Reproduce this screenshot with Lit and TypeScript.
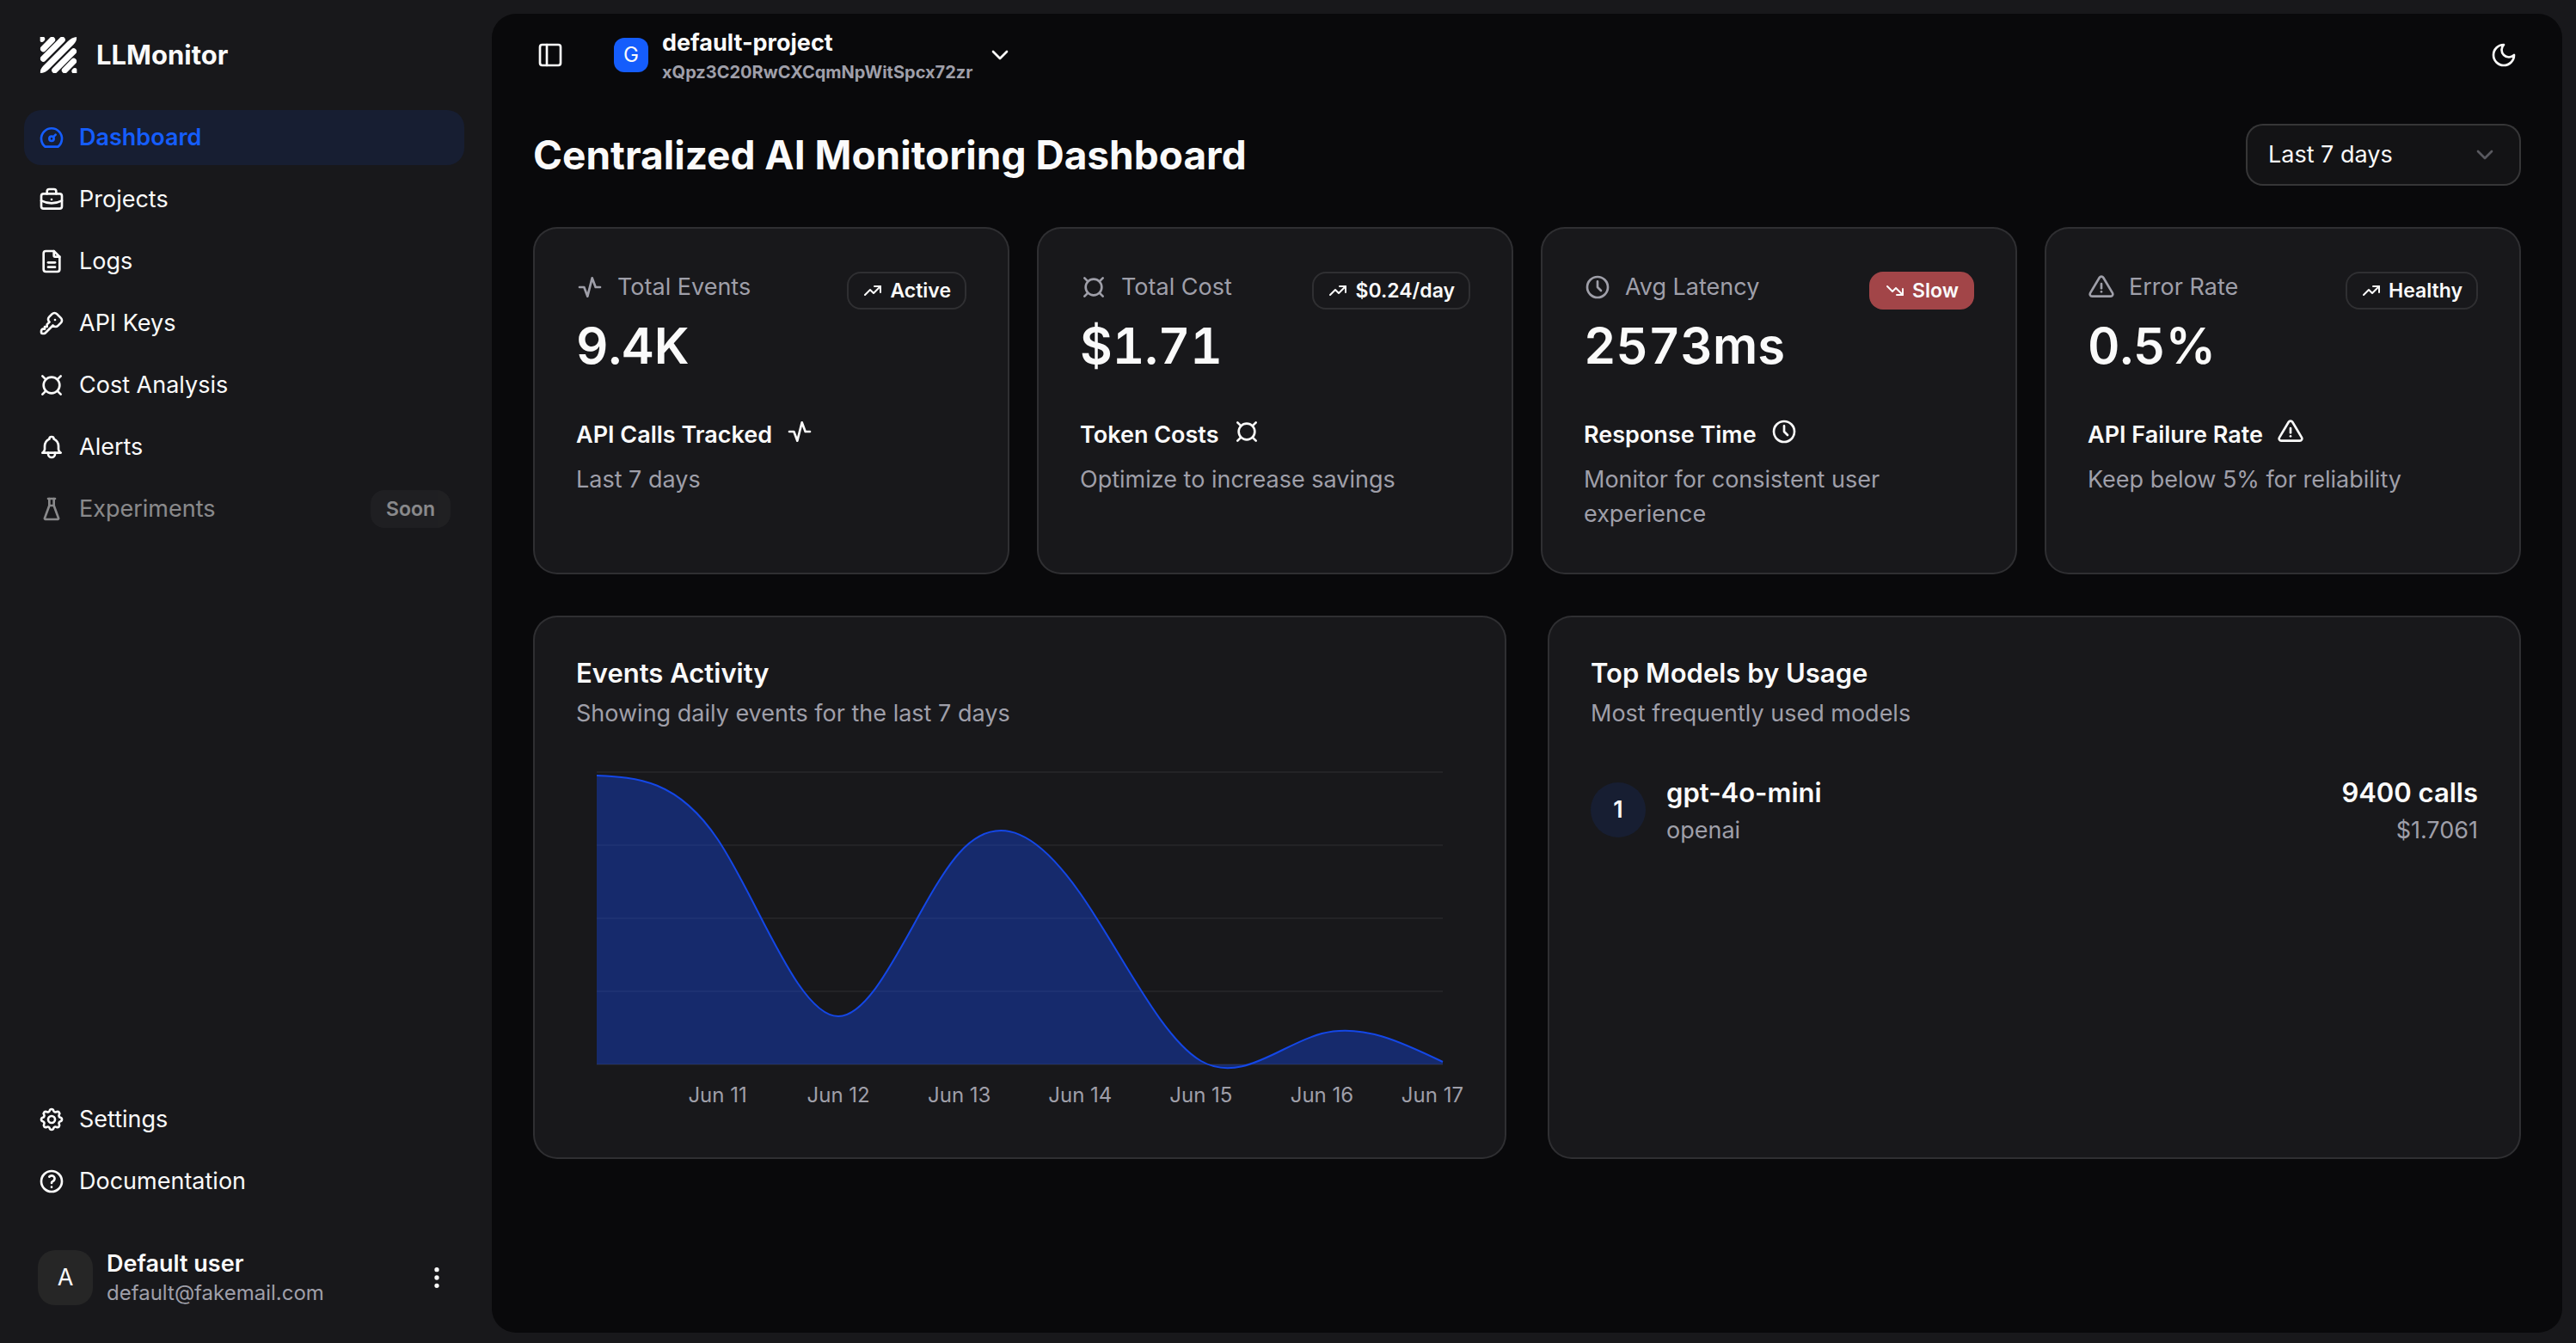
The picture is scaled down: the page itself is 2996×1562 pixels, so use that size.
import { LitElement, html, css, svg, nothing } from "lit";
import { customElement, property } from "lit/decorators.js";

const ICONS: Record<string, string[]> = {
  dashboard: ["M10 13a2 2 0 1 0 4 0a2 2 0 1 0 -4 0", "M13.45 11.55l2.05 -2.05", "M6.4 20a9 9 0 1 1 11.2 0z"],
  briefcase: [
    "M3 9a2 2 0 0 1 2 -2h14a2 2 0 0 1 2 2v9a2 2 0 0 1 -2 2h-14a2 2 0 0 1 -2 -2z",
    "M8 7v-2a2 2 0 0 1 2 -2h4a2 2 0 0 1 2 2v2",
    "M12 12l0 .01",
    "M3 13a20 20 0 0 0 18 0",
  ],
  file: [
    "M14 3v4a1 1 0 0 0 1 1h4",
    "M17 21h-10a2 2 0 0 1 -2 -2v-14a2 2 0 0 1 2 -2h7l5 5v11a2 2 0 0 1 -2 2z",
    "M9 17h6",
    "M9 13h6",
  ],
  key: [
    "M16.555 3.843l3.602 3.602a2.877 2.877 0 0 1 0 4.069l-2.643 2.643a2.877 2.877 0 0 1 -4.069 0l-.301 -.301l-6.558 6.558a2 2 0 0 1 -1.239 .578l-.175 .008h-1.172a1 1 0 0 1 -.993 -.883l-.007 -.117v-1.172a2 2 0 0 1 .467 -1.284l.119 -.13l.414 -.414h2v-2h2v-2l2.144 -2.144l-.301 -.301a2.877 2.877 0 0 1 0 -4.069l2.643 -2.643a2.877 2.877 0 0 1 4.069 0z",
    "M15 9h.01",
  ],
  currency: ["M5 12a7 7 0 1 0 14 0a7 7 0 1 0 -14 0", "M4 4l3 3", "M20 4l-3 3", "M4 20l3 -3", "M20 20l-3 -3"],
  bell: [
    "M10 5a2 2 0 1 1 4 0a7 7 0 0 1 4 6v3a4 4 0 0 0 2 3h-16a4 4 0 0 0 2 -3v-3a7 7 0 0 1 4 -6",
    "M9 17v1a3 3 0 0 0 6 0v-1",
  ],
  flask: ["M9 3l6 0", "M10 9l4 0", "M10 3v6l-4 11a.7 .7 0 0 0 .5 1h11a.7 .7 0 0 0 .5 -1l-4 -11v-6"],
  settings: [
    "M10.325 4.317c.426 -1.756 2.924 -1.756 3.35 0a1.724 1.724 0 0 0 2.573 1.066c1.543 -.94 3.31 .826 2.37 2.37a1.724 1.724 0 0 0 1.065 2.572c1.756 .426 1.756 2.924 0 3.35a1.724 1.724 0 0 0 -1.066 2.573c.94 1.543 -.826 3.31 -2.37 2.37a1.724 1.724 0 0 0 -2.572 1.065c-.426 1.756 -2.924 1.756 -3.35 0a1.724 1.724 0 0 0 -2.573 -1.066c-1.543 .94 -3.31 -.826 -2.37 -2.37a1.724 1.724 0 0 0 -1.065 -2.572c-1.756 -.426 -1.756 -2.924 0 -3.35a1.724 1.724 0 0 0 1.066 -2.573c-.94 -1.543 .826 -3.31 2.37 -2.37c1 .608 2.296 .07 2.572 -1.065z",
    "M9 12a3 3 0 1 0 6 0a3 3 0 0 0 -6 0",
  ],
  help: [
    "M3 12a9 9 0 1 0 18 0a9 9 0 1 0 -18 0",
    "M12 17l0 .01",
    "M12 13.5a1.5 1.5 0 0 1 1 -1.5a2.6 2.6 0 1 0 -3 -4",
  ],
  dots: [
    "M11 12a1 1 0 1 0 2 0a1 1 0 1 0 -2 0",
    "M11 19a1 1 0 1 0 2 0a1 1 0 1 0 -2 0",
    "M11 5a1 1 0 1 0 2 0a1 1 0 1 0 -2 0",
  ],
  panel: ["M5 3h14a2 2 0 0 1 2 2v14a2 2 0 0 1 -2 2h-14a2 2 0 0 1 -2 -2v-14a2 2 0 0 1 2 -2z", "M9 3v18"],
  chevron: ["M6 9l6 6l6 -6"],
  moon: ["M12 3a6 6 0 0 0 9 9a9 9 0 1 1 -9 -9z"],
  activity: ["M3 12h4l3 8l4 -16l3 8h4"],
  clock: ["M3 12a9 9 0 1 0 18 0a9 9 0 0 0 -18 0", "M12 7v5l3 3"],
  alert: [
    "M12 9v4",
    "M10.363 3.591l-8.106 13.534a1.914 1.914 0 0 0 1.636 2.871h16.214a1.914 1.914 0 0 0 1.636 -2.87l-8.106 -13.536a1.914 1.914 0 0 0 -3.274 0z",
    "M12 16h.01",
  ],
  up: ["M3 17l6 -6l4 4l8 -8", "M14 7l7 0l0 7"],
  down: ["M3 7l6 6l4 -4l8 8", "M21 10l0 7l-7 0"],
};

@customElement("ui-icon")
export class UiIcon extends LitElement {
  @property() name = "";

  static styles = css`
    :host {
      display: block;
      flex: none;
      width: 32px;
      height: 32px;
    }
    .glyph {
      display: block;
      width: 100%;
      height: 100%;
      fill: none;
      stroke: currentColor;
      stroke-width: 2;
      stroke-linecap: round;
      stroke-linejoin: round;
    }
  `;

  render() {
    return html`<svg class="glyph" viewBox="0 0 24 24" aria-hidden="true">
      ${(ICONS[this.name] ?? []).map((d) => svg`<path d=${d}></path>`)}
    </svg>`;
  }
}

/* Control points of a natural cubic spline along one axis. */
function splineControls(v: number[]): [number[], number[]] {
  const n = v.length - 1;
  const a = new Array(n).fill(0);
  const b = new Array(n).fill(0);
  const r = new Array(n).fill(0);
  a[0] = 0;
  b[0] = 2;
  r[0] = v[0] + 2 * v[1];
  for (let i = 1; i < n - 1; i++) {
    a[i] = 1;
    b[i] = 4;
    r[i] = 4 * v[i] + 2 * v[i + 1];
  }
  a[n - 1] = 2;
  b[n - 1] = 7;
  r[n - 1] = 8 * v[n - 1] + v[n];
  for (let i = 1; i < n; i++) {
    const m = a[i] / b[i - 1];
    b[i] -= m;
    r[i] -= m * r[i - 1];
  }
  a[n - 1] = r[n - 1] / b[n - 1];
  for (let i = n - 2; i >= 0; i--) a[i] = (r[i] - a[i + 1]) / b[i];
  b[n - 1] = (v[n] + a[n - 1]) / 2;
  for (let i = 0; i < n - 1; i++) b[i] = 2 * v[i + 1] - a[i + 1];
  return [a, b];
}

@customElement("events-chart")
export class EventsChart extends LitElement {
  private heights = [336, 262, 56, 246, 199, 4, 36, 3];
  private labels = ["Jun 11", "Jun 12", "Jun 13", "Jun 14", "Jun 15", "Jun 16", "Jun 17"];

  static styles = css`
    :host {
      display: block;
      padding: 0 24px;
    }
    .plot {
      display: block;
      width: 100%;
      height: 340px;
      overflow: visible;
    }
    .grid {
      stroke: rgba(255, 255, 255, 0.05);
      stroke-width: 2;
    }
    .area {
      fill: #1447e6;
      fill-opacity: 0.4;
    }
    .line {
      fill: none;
      stroke: #1447e6;
      stroke-width: 2;
      vector-effect: non-scaling-stroke;
    }
    .axis {
      display: grid;
      grid-template-columns: 1fr repeat(6, 2fr) 1fr;
      padding: 22px 0 10px;
      font-size: 24px;
      line-height: 28px;
      color: #9f9fa9;
      white-space: nowrap;
    }
    .tick {
      justify-self: center;
    }
    .tick:first-child {
      grid-column: 2;
    }
    .tick:last-child {
      justify-self: end;
      margin-right: -24px;
    }
  `;

  render() {
    const w = 984;
    const h = 340;
    const xs = this.heights.map((_, i) => (i * w) / (this.heights.length - 1));
    const ys = this.heights.map((v) => h - v);
    const [ax, bx] = splineControls(xs);
    const [ay, by] = splineControls(ys);
    let line = `M${xs[0]},${ys[0]}`;
    for (let i = 0; i < xs.length - 1; i++) {
      line += `C${ax[i]},${ay[i]},${bx[i]},${by[i]},${xs[i + 1]},${ys[i + 1]}`;
    }
    return html`
      <svg class="plot" viewBox="0 0 ${w} ${h}" preserveAspectRatio="none" role="img" aria-label="Daily events">
        ${[0, 1, 2, 3, 4].map((i) => svg`<line class="grid" x1="0" x2=${w} y1=${i * 85} y2=${i * 85}></line>`)}
        <path class="area" d="${line}L${w},${h}L0,${h}Z"></path>
        <path class="line" d=${line}></path>
      </svg>
      <div class="axis">${this.labels.map((l) => html`<span class="tick">${l}</span>`)}</div>
    `;
  }
}

interface Stat {
  icon: string;
  label: string;
  value: string;
  trend: string;
  badge: string;
  slow?: boolean;
  title: string;
  note: string;
}

@customElement("app-root")
export class AppRoot extends LitElement {
  private nav = [
    { icon: "dashboard", label: "Dashboard", active: true },
    { icon: "briefcase", label: "Projects" },
    { icon: "file", label: "Logs" },
    { icon: "key", label: "API Keys" },
    { icon: "currency", label: "Cost Analysis" },
    { icon: "bell", label: "Alerts" },
  ];

  private stats: Stat[] = [
    { icon: "activity", label: "Total Events", value: "9.4K", trend: "up", badge: "Active", title: "API Calls Tracked", note: "Last 7 days" },
    { icon: "currency", label: "Total Cost", value: "$1.71", trend: "up", badge: "$0.24/day", title: "Token Costs", note: "Optimize to increase savings" },
    { icon: "clock", label: "Avg Latency", value: "2573ms", trend: "down", badge: "Slow", slow: true, title: "Response Time", note: "Monitor for consistent user experience" },
    { icon: "alert", label: "Error Rate", value: "0.5%", trend: "up", badge: "Healthy", title: "API Failure Rate", note: "Keep below 5% for reliability" },
  ];

  static styles = css`
    :host {
      display: block;
      font-family: Inter, "Liberation Sans", sans-serif;
      font-size: 27px;
      line-height: 40px;
      color: #fafafa;
      background: #18181b;
    }
    * {
      box-sizing: border-box;
    }
    h1, h2, h3, p {
      margin: 0;
    }
    button, select {
      font: inherit;
      color: inherit;
      background: none;
      border: 0;
      padding: 0;
      margin: 0;
      text-align: left;
    }
    a {
      color: inherit;
      text-decoration: none;
    }
    .shell {
      display: flex;
      min-height: 100vh;
    }

    .sidebar {
      flex: none;
      width: 572px;
      display: flex;
      flex-direction: column;
      padding: 32px 32px 28px 28px;
    }
    .brand {
      display: flex;
      align-items: center;
      gap: 20px;
      height: 64px;
      padding: 0 16px;
      margin-bottom: 32px;
      font-size: 31px;
      font-weight: 700;
    }
    .logo {
      width: 48px;
      height: 48px;
    }
    .nav {
      display: flex;
      flex-direction: column;
      gap: 8px;
    }
    .bottom {
      margin-top: auto;
      margin-bottom: 32px;
    }
    .item {
      display: flex;
      align-items: center;
      gap: 16px;
      height: 64px;
      padding: 0 16px;
      border-radius: 20px;
    }
    .active {
      background: rgba(21, 93, 252, 0.1);
      color: #155dfc;
      font-weight: 600;
    }
    .disabled {
      opacity: 0.5;
    }
    .soon {
      margin-left: auto;
      padding: 6px 18px;
      border-radius: 16px;
      background: #27272a;
      font-size: 23px;
      line-height: 32px;
      font-weight: 600;
    }
    .user {
      display: flex;
      align-items: center;
      gap: 16px;
      height: 96px;
      padding: 0 16px;
    }
    .avatar {
      display: grid;
      place-items: center;
      width: 64px;
      height: 64px;
      border-radius: 20px;
      background: #262626;
    }
    .identity {
      flex: 1;
    }
    .name {
      font-weight: 600;
      line-height: 36px;
    }
    .email {
      font-size: 24px;
      line-height: 32px;
      color: #9f9fa9;
    }

    .main {
      flex: 1;
      min-width: 0;
      margin: 16px 16px 12px 0;
      border-radius: 28px;
      background: #09090b;
      padding: 0 48px 48px;
    }
    .topbar {
      display: flex;
      align-items: center;
      height: 96px;
      padding: 0 4px;
    }
    .project {
      display: flex;
      align-items: center;
      gap: 16px;
      margin-left: 58px;
    }
    .tile {
      display: grid;
      place-items: center;
      width: 40px;
      height: 40px;
      border-radius: 12px;
      background: #155dfc;
      font-size: 24px;
    }
    .lines {
      display: flex;
      flex-direction: column;
    }
    .project-name {
      font-weight: 700;
      line-height: 40px;
    }
    .project-id {
      font-size: 20px;
      line-height: 28px;
      font-weight: 700;
      color: #9f9fa9;
    }
    .theme {
      margin-left: auto;
    }
    .heading {
      display: flex;
      align-items: center;
      justify-content: space-between;
      margin: 32px 0 48px;
    }
    .title {
      font-size: 46px;
      line-height: 64px;
      font-weight: 700;
    }
    .range {
      display: grid;
      align-items: center;
      width: 320px;
      height: 72px;
    }
    .range-select {
      grid-area: 1 / 1;
      appearance: none;
      width: 100%;
      height: 100%;
      padding: 0 24px;
      border: 2px solid rgba(255, 255, 255, 0.15);
      border-radius: 20px;
      background: rgba(255, 255, 255, 0.045);
    }
    .range-icon {
      grid-area: 1 / 1;
      justify-self: end;
      margin-right: 26px;
      color: #9f9fa9;
      opacity: 0.5;
      pointer-events: none;
    }

    .stats {
      display: grid;
      grid-template-columns: repeat(4, minmax(0, 1fr));
      gap: 32px;
      margin-bottom: 48px;
    }
    .card {
      display: flex;
      flex-direction: column;
      gap: 48px;
      padding: 48px;
      border: 2px solid rgba(255, 255, 255, 0.1);
      border-radius: 28px;
      background: #18181b;
    }
    .card-head {
      display: flex;
      align-items: flex-start;
      justify-content: space-between;
    }
    .metric {
      display: flex;
      flex-direction: column;
      gap: 12px;
    }
    .label {
      display: flex;
      align-items: center;
      gap: 16px;
      color: #9f9fa9;
    }
    .value {
      font-size: 58px;
      line-height: 72px;
      font-weight: 600;
      font-variant-numeric: tabular-nums;
    }
    .badge {
      display: flex;
      align-items: center;
      gap: 8px;
      height: 44px;
      margin-top: 2px;
      padding: 0 16px;
      border: 2px solid rgba(255, 255, 255, 0.1);
      border-radius: 16px;
      font-size: 23px;
      line-height: 32px;
      font-weight: 600;
    }
    .slow {
      padding: 0 18px;
      border: 0;
      background: rgba(255, 100, 103, 0.6);
    }
    .badge-icon {
      width: 24px;
      height: 24px;
    }
    .foot {
      display: flex;
      flex-direction: column;
      gap: 12px;
    }
    .foot-title {
      display: flex;
      align-items: flex-start;
      gap: 16px;
      font-weight: 600;
    }
    .muted {
      color: #9f9fa9;
    }

    .panels {
      display: grid;
      grid-template-columns: repeat(2, minmax(0, 1fr));
      gap: 48px;
    }
    .panel-head {
      display: flex;
      flex-direction: column;
      gap: 10px;
    }
    .panel-title {
      font-size: 31px;
      line-height: 34px;
      font-weight: 600;
    }
    .model {
      display: flex;
      align-items: center;
      gap: 24px;
    }
    .rank {
      display: grid;
      place-items: center;
      width: 64px;
      height: 64px;
      border-radius: 50%;
      background: rgba(21, 93, 252, 0.1);
      font-weight: 600;
    }
    .strong {
      font-size: 31px;
      line-height: 48px;
      font-weight: 600;
    }
    .usage {
      margin-left: auto;
      text-align: right;
    }
  `;

  private item(icon: string, label: string, active = false) {
    return html`<a class="item ${active ? "active" : ""}" href="#" aria-current=${active ? "page" : nothing}>
      <ui-icon name=${icon}></ui-icon><span>${label}</span>
    </a>`;
  }

  private stat(s: Stat) {
    return html`<article class="card">
      <div class="card-head">
        <div class="metric">
          <div class="label"><ui-icon name=${s.icon}></ui-icon><span>${s.label}</span></div>
          <div class="value">${s.value}</div>
        </div>
        <div class="badge ${s.slow ? "slow" : ""}">
          <ui-icon class="badge-icon" name=${s.trend}></ui-icon><span>${s.badge}</span>
        </div>
      </div>
      <div class="foot">
        <div class="foot-title"><span>${s.title}</span><ui-icon name=${s.icon}></ui-icon></div>
        <p class="muted">${s.note}</p>
      </div>
    </article>`;
  }

  render() {
    return html`
      <div class="shell">
        <aside class="sidebar">
          <div class="brand">
            <svg class="logo" viewBox="24 18 144 144" aria-hidden="true">
              <defs><clipPath id="mark"><rect x="32" y="27" width="128" height="126"></rect></clipPath></defs>
              <g clip-path="url(#mark)">
                <path fill="#fff" d="M32 153C32 142 36 136 42 129L128 43C137 34 148 27 160 27C160 38 156 45 150 52L64 138C56 147 44 153 32 153Z"></path>
                <path
                  fill="none"
                  stroke="#fff"
                  stroke-width="21"
                  stroke-linecap="round"
                  d="M37 33l1 1M43 68L74 37M43 103L109 37M83 143L149 77M118 143L149 112M153 146l1 1"
                ></path>
              </g>
            </svg>
            <span>LLMonitor</span>
          </div>
          <nav class="nav">
            ${this.nav.map((n) => this.item(n.icon, n.label, n.active))}
            <div class="item disabled">
              <ui-icon name="flask"></ui-icon><span>Experiments</span><span class="soon">Soon</span>
            </div>
          </nav>
          <nav class="nav bottom">${this.item("settings", "Settings")}${this.item("help", "Documentation")}</nav>
          <div class="user">
            <div class="avatar">A</div>
            <div class="identity">
              <div class="name">Default user</div>
              <div class="email">default@fakemail.com</div>
            </div>
            <button aria-label="Account menu"><ui-icon name="dots"></ui-icon></button>
          </div>
        </aside>
        <main class="main">
          <header class="topbar">
            <button aria-label="Toggle sidebar"><ui-icon name="panel"></ui-icon></button>
            <button class="project">
              <span class="tile">G</span>
              <span class="lines">
                <span class="project-name">default-project</span>
                <span class="project-id">xQpz3C20RwCXCqmNpWitSpcx72zr</span>
              </span>
              <ui-icon name="chevron"></ui-icon>
            </button>
            <button class="theme" aria-label="Toggle theme"><ui-icon name="moon"></ui-icon></button>
          </header>
          <div class="heading">
            <h1 class="title">Centralized AI Monitoring Dashboard</h1>
            <div class="range">
              <select class="range-select" aria-label="Time range">
                <option>Last 7 days</option>
                <option>Last 30 days</option>
              </select>
              <ui-icon class="range-icon" name="chevron"></ui-icon>
            </div>
          </div>
          <section class="stats">${this.stats.map((s) => this.stat(s))}</section>
          <section class="panels">
            <article class="card">
              <div class="panel-head">
                <h2 class="panel-title">Events Activity</h2>
                <p class="muted">Showing daily events for the last 7 days</p>
              </div>
              <events-chart></events-chart>
            </article>
            <article class="card">
              <div class="panel-head">
                <h2 class="panel-title">Top Models by Usage</h2>
                <p class="muted">Most frequently used models</p>
              </div>
              <div class="model">
                <div class="rank">1</div>
                <div>
                  <div class="strong">gpt-4o-mini</div>
                  <div class="muted">openai</div>
                </div>
                <div class="usage">
                  <div class="strong">9400 calls</div>
                  <div class="muted">$1.7061</div>
                </div>
              </div>
            </article>
          </section>
        </main>
      </div>
    `;
  }
}
